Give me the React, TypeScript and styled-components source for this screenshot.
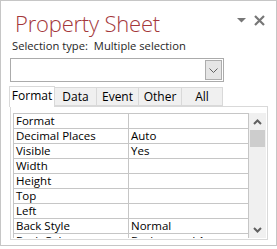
import React from 'react'
import styled, { createGlobalStyle } from 'styled-components'

const GlobalStyle = createGlobalStyle`
	html, body {
		margin: 0;
		padding: 0;
		background: #ffffff;
	}
	body {
		font-family: 'Open Sans', 'Noto Sans', sans-serif;
		color: #000000;
	}
`

const ROWS: { name: string; value: string }[] = [
	{ name: 'Format', value: '' },
	{ name: 'Decimal Places', value: 'Auto' },
	{ name: 'Visible', value: 'Yes' },
	{ name: 'Width', value: '' },
	{ name: 'Height', value: '' },
	{ name: 'Top', value: '' },
	{ name: 'Left', value: '' },
	{ name: 'Back Style', value: 'Normal' },
	{ name: 'Back Color', value: 'Background 1' },
]

const TABS = [
	{ label: 'Format', width: 46 },
	{ label: 'Data', width: 42 },
	{ label: 'Event', width: 42 },
	{ label: 'Other', width: 43 },
	{ label: 'All', width: 41 },
]

const App: React.FC = () => {
	return (
		<>
			<GlobalStyle />
			<Panel>
				<Header>
					<Title>Property Sheet</Title>
					<Controls>
						<svg width="9" height="5" viewBox="0 0 9 5">
							<path d="M0 0 H9 L4.5 4.5 Z" fill="#777777" />
						</svg>
						<svg width="11" height="11" viewBox="0 0 11 11">
							<path d="M1 1 L10 10 M10 1 L1 10" stroke="#777777" strokeWidth="2.2" />
						</svg>
					</Controls>
				</Header>
				<Selection>
					<span>Selection type:</span>
					<span>Multiple selection</span>
				</Selection>
				<Combo>
					<ComboButton>
						<svg width="9" height="5" viewBox="0 0 9 5">
							<path d="M0.5 0.5 L4.5 4.5 L8.5 0.5" stroke="#606060" fill="none" />
						</svg>
					</ComboButton>
				</Combo>
				<Tabs>
					{TABS.map((t, i) => (
						<Tab key={t.label} $active={i === 0} $width={t.width}>
							{t.label}
						</Tab>
					))}
				</Tabs>
				<TabPanel>
					<Grid>
						{ROWS.map((r) => (
							<Row key={r.name}>
								<Cell>{r.name}</Cell>
								<Cell>{r.value}</Cell>
							</Row>
						))}
					</Grid>
					<Scrollbar>
						<ScrollArrow>
							<svg width="9" height="6" viewBox="0 0 9 6">
								<path d="M1 5 L4.5 1.5 L8 5" stroke="#606060" strokeWidth="2" fill="none" />
							</svg>
						</ScrollArrow>
						<Track>
							<Thumb />
						</Track>
						<ScrollArrow>
							<svg width="9" height="6" viewBox="0 0 9 6">
								<path d="M1 1 L4.5 4.5 L8 1" stroke="#606060" strokeWidth="2" fill="none" />
							</svg>
						</ScrollArrow>
					</Scrollbar>
				</TabPanel>
			</Panel>
		</>
	)
}

const Panel = styled.div`
	width: 277px;
	height: 246px;
	box-sizing: border-box;
	border: 1px solid #c6c6c6;
	padding: 0 8px;
	display: flex;
	flex-direction: column;
	overflow: hidden;
`

const Header = styled.div`
	display: flex;
	align-items: flex-start;
	justify-content: space-between;
	height: 37px;
`

const Title = styled.h1`
	margin: 7px 0 0 6px;
	font-size: 22px;
	font-weight: 300;
	color: #a4373a;
	line-height: 30px;
	letter-spacing: -0.2px;
`

const Controls = styled.div`
	display: flex;
	align-items: center;
	gap: 8px;
	margin-top: 14px;
	margin-right: 3px;
`

const Selection = styled.div`
	display: flex;
	gap: 6px;
	font-size: 11.2px;
	line-height: 16px;
	color: #262626;
	padding-left: 3px;
`

const Combo = styled.div`
	margin-top: 4px;
	margin-left: 1px;
	width: 214px;
	height: 24px;
	box-sizing: border-box;
	border: 1px solid #ababab;
	display: flex;
	justify-content: flex-end;
	align-items: center;
	padding-right: 1px;
`

const ComboButton = styled.div`
	width: 17px;
	height: 20px;
	box-sizing: border-box;
	border: 1px solid #adadad;
	background: #e5e5e5;
	display: flex;
	align-items: center;
	justify-content: center;
`

const Tabs = styled.div`
	display: flex;
	align-items: flex-end;
	margin-top: 3px;
	height: 21px;
	position: relative;
	z-index: 1;
`

const Tab = styled.div<{ $active: boolean; $width: number }>`
	width: ${({ $width }) => $width}px;
	height: ${({ $active }) => ($active ? 21 : 19)}px;
	box-sizing: border-box;
	border: 1px solid #d9d9d9;
	border-bottom: ${({ $active }) => ($active ? 'none' : '1px solid #d9d9d9')};
	border-left: ${({ $active }) => ($active ? '1px solid #d9d9d9' : 'none')};
	background: ${({ $active }) => ($active ? '#ffffff' : '#f0f0f0')};
	font-size: 12px;
	line-height: 17px;
	text-align: center;
	margin-bottom: ${({ $active }) => ($active ? -1 : 0)}px;
`

const TabPanel = styled.div`
	flex: 1;
	margin-left: 1px;
	margin-bottom: 5px;
	border: 1px solid #d9d9d9;
	padding: 6px 1px 1px 2px;
	display: flex;
	overflow: hidden;
`

const Grid = styled.div`
	flex: 1;
	display: flex;
	flex-direction: column;
	border-top: 1px solid #c6c6c6;
	border-left: 1px solid #c6c6c6;
	overflow: hidden;
`

const Row = styled.div`
	display: grid;
	grid-template-columns: 115px 1fr;
	flex-shrink: 0;
	height: 15px;
	border-bottom: 1px solid #c6c6c6;
	box-sizing: border-box;
	font-size: 11.5px;
	line-height: 14px;
`

const Cell = styled.div`
	padding-left: 2px;
	border-right: 1px solid #c6c6c6;
	white-space: nowrap;
`

const Scrollbar = styled.div`
	width: 17px;
	background: #f0f0f0;
	display: flex;
	flex-direction: column;
`

const ScrollArrow = styled.div`
	height: 17px;
	display: flex;
	align-items: center;
	justify-content: center;
	flex-shrink: 0;
`

const Track = styled.div`
	flex: 1;
	padding: 0 1px;
`

const Thumb = styled.div`
	height: 17px;
	background: #cdcdcd;
`

export default App
